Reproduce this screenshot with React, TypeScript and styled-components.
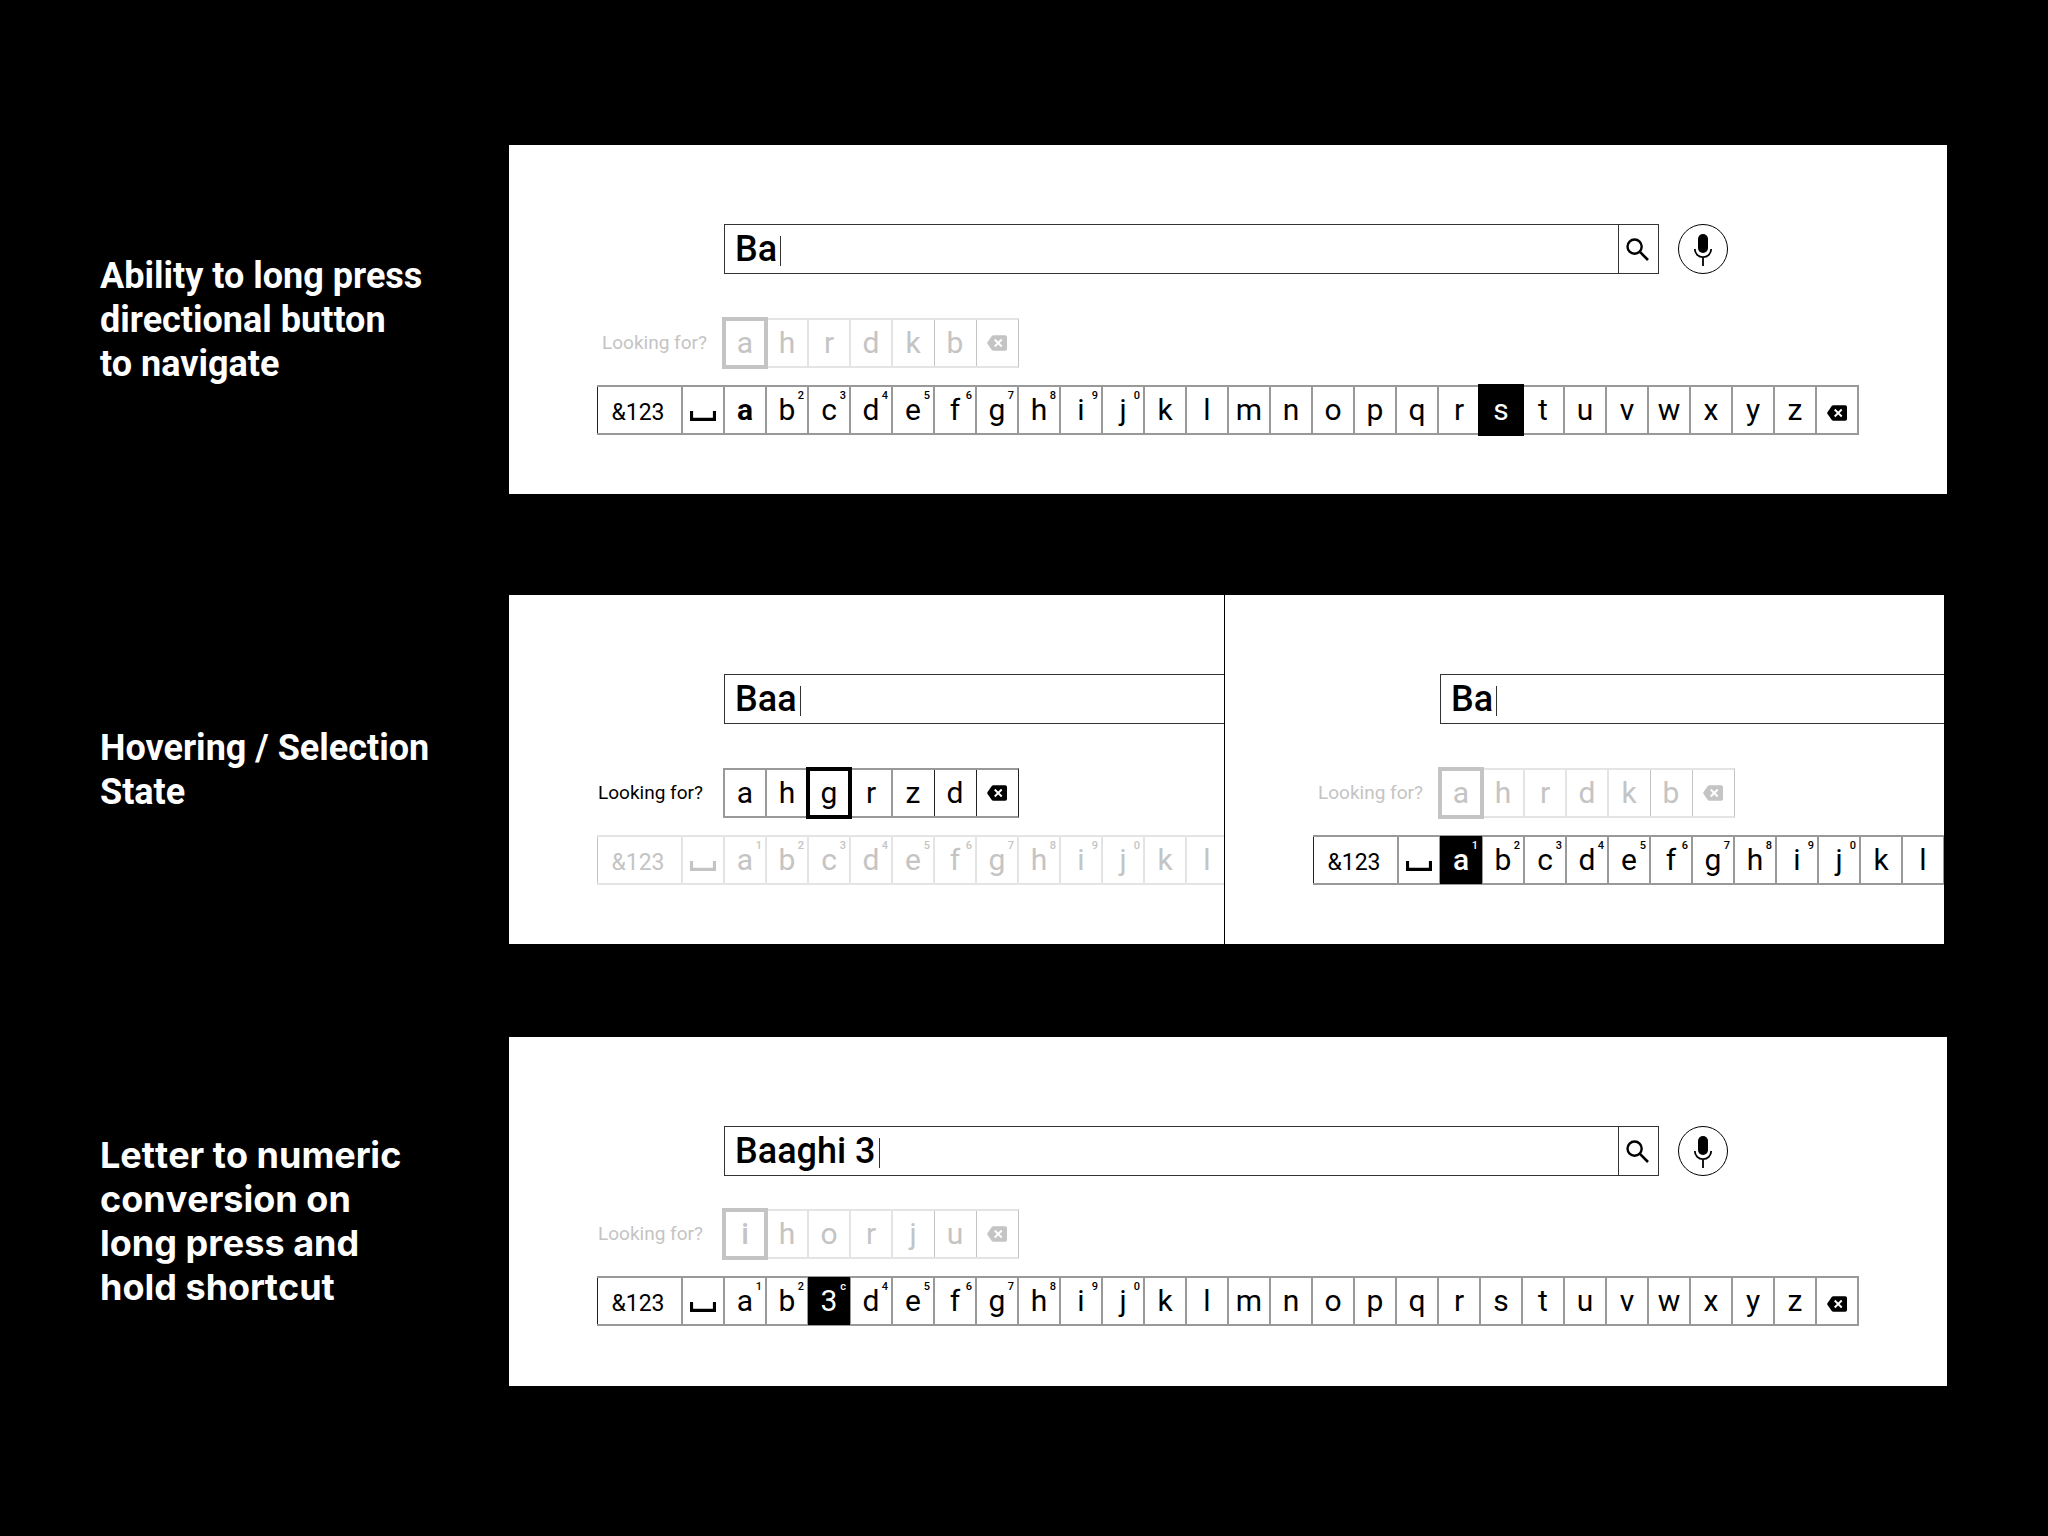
import React, { useState } from "react";
import styled, { createGlobalStyle, css } from "styled-components";

const GlobalStyle = createGlobalStyle`
  *, *::before, *::after { box-sizing: border-box; }
  body { margin: 0; background: #000; font-family: Roboto, "Liberation Sans", sans-serif; }
`;

const INK = "#000";
const MUTED = "#c4c4c4";
const LINE = "#999";
const MUTED_LINE = "#e4e4e4";

const Page = styled.main`
  min-height: 100vh;
  padding: 145px 101px 145px 100px;
  background: #000;
`;

const Section = styled.section<{ $space: number }>`
  display: grid;
  grid-template-columns: 409px minmax(0, 1fr);
  align-items: center;
  margin-top: ${(p) => p.$space}px;
`;

const Title = styled.h2<{ $inter?: boolean }>`
  margin: 0;
  padding-top: ${(p) => (p.$inter ? 18 : 0)}px;
  color: #fff;
  font-family: ${(p) => (p.$inter ? "Inter, " : "")}Roboto, "Liberation Sans", sans-serif;
  font-size: 36px;
  font-weight: 700;
  font-kerning: ${(p) => (p.$inter ? "none" : "auto")};
  line-height: 44px;
  white-space: pre-line;
`;

const Panel = styled.div`
  background: #fff;
  overflow: hidden;
`;

const SplitPanel = styled(Panel)`
  display: grid;
  grid-template-columns: 716fr 719fr;
  margin-right: 3px;
`;

const Half = styled.div<{ $divided?: boolean }>`
  min-width: 0;
  overflow: hidden;
  border-right: ${(p) => (p.$divided ? "1px solid #000" : "0")};
`;

const Board = styled.div<{ $low?: boolean }>`
  display: flex;
  flex-direction: column;
  padding: ${(p) => (p.$low ? "89px 0 60px 88px" : "79px 0 59px 88px")};
`;

const SearchRow = styled.form<{ $low?: boolean }>`
  display: flex;
  gap: 19px;
  margin: 0 0 ${(p) => (p.$low ? 33 : 44)}px 127px;
`;

const SearchBox = styled.div<{ $open?: boolean }>`
  display: flex;
  height: 50px;
  border: 1px solid #333;
  ${(p) =>
    p.$open
      ? css`
          flex: 1;
          border-right: 0;
        `
      : css`
          flex: 0 1 935px;
        `}
`;

const Field = styled.label`
  display: flex;
  flex: 1;
  align-items: center;
  gap: 3px;
  padding-left: 10px;
  cursor: text;
`;

const FieldInput = styled.input`
  field-sizing: content;
  height: 48px;
  padding: 0;
  border: 0;
  outline: 0;
  background: none;
  color: #000;
  font: 500 36px/48px Roboto, "Liberation Sans", sans-serif;
  caret-color: transparent;
`;

const Caret = styled.span`
  width: 1px;
  height: 30px;
  margin-top: 3px;
  background: #333;
`;

const SearchButton = styled.button`
  display: flex;
  align-items: center;
  justify-content: center;
  width: 40px;
  padding: 0 2px 0 0;
  border: 0;
  border-left: 1px solid #333;
  background: none;
  color: #000;
`;

const MicButton = styled.button`
  width: 50px;
  height: 50px;
  padding: 0;
  border: 0;
  background: none;
  color: #000;
`;

const SuggestRow = styled.div`
  display: grid;
  grid-template-columns: 126px max-content;
  margin-bottom: 17px;
`;

const Prompt = styled.span<{ $muted?: boolean; $indent?: boolean }>`
  padding-left: ${(p) => (p.$indent ? 5 : 1)}px;
  color: ${(p) => (p.$muted ? MUTED : INK)};
  font-size: 19px;
  line-height: 50px;
  white-space: nowrap;
`;

const Keys = styled.div<{ $muted?: boolean; $crispEnd?: boolean }>`
  --ink: ${(p) => (p.$muted ? MUTED : INK)};
  --line: ${(p) => (p.$muted ? MUTED_LINE : LINE)};
  --edge: ${(p) => (p.$muted ? MUTED : "#222")};
  display: flex;
  width: max-content;
  height: 50px;
  border: 2px solid var(--line);
  border-left: 0;
  color: var(--ink);
  ${(p) =>
    p.$crispEnd &&
    css`
      padding-right: 1px;
      border-right: 1px solid var(--edge);
    `}
`;

type Mark = "none" | "outline" | "fill" | "fillLarge";

const KeyButton = styled.button<{ $mark?: Mark; $weight?: number; $crisp?: boolean }>`
  position: relative;
  isolation: isolate;
  flex: none;
  width: ${(p) => (p.$crisp ? 41 : 42)}px;
  height: 46px;
  margin: 0 0 0 ${(p) => (p.$crisp ? 1 : 0)}px;
  padding: 0;
  border: 0;
  border-left: ${(p) => (p.$crisp ? "1px solid var(--edge)" : "2px solid var(--line)")};
  background: none;
  color: inherit;
  font: ${(p) => p.$weight ?? 400} 30px/46px Roboto, "Liberation Sans", sans-serif;
  text-align: center;

  ${(p) =>
    p.$mark === "outline" &&
    css`
      z-index: 1;
      &::before {
        content: "";
        position: absolute;
        z-index: -1;
        inset: -3px;
        border: 4px solid var(--ink);
        background: #fff;
      }
    `}
  ${(p) =>
    (p.$mark === "fill" || p.$mark === "fillLarge") &&
    css`
      z-index: 1;
      color: #fff;
      &::before {
        content: "";
        position: absolute;
        z-index: -1;
        inset: ${p.$mark === "fill" ? -1 : -3}px;
        background: #000;
      }
    `}
`;

const ModeKey = styled(KeyButton)`
  display: flex;
  justify-content: center;
  width: 84px;
  padding-right: 3px;
  border-left: 1px solid var(--edge);
  font-size: 23px;
  line-height: 51px;
`;

const IconKey = styled(KeyButton)<{ $raise?: boolean }>`
  display: flex;
  align-items: flex-end;
  justify-content: center;
  padding-bottom: ${(p) => (p.$raise ? 15 : 12)}px;
`;

const Alt = styled.span`
  position: absolute;
  top: 3px;
  right: 3px;
  font-size: 11px;
  font-weight: 500;
  line-height: 12px;
`;

const BackspaceIcon = () => (
  <svg width="20" height="16" viewBox="0 0 20 16" aria-hidden="true">
    <path
      d="M6.4 0.2H18.2Q20 0.2 20 2V14Q20 15.8 18.2 15.8H6.4Q5.3 15.8 4.6 14.8L0.4 8.8Q0 8 0.4 7.2L4.6 1.2Q5.3 0.2 6.4 0.2Z"
      fill="currentColor"
    />
    <path d="M7.7 4.5L14.7 11.5M14.7 4.5L7.7 11.5" stroke="#fff" strokeWidth="1.9" fill="none" />
  </svg>
);

const SpaceIcon = () => (
  <svg width="26" height="10" viewBox="0 0 26 10" aria-hidden="true">
    <path d="M1.5 0V8.3H24.5V0" stroke="currentColor" strokeWidth="3.2" fill="none" />
  </svg>
);

const SearchIcon = () => (
  <svg width="23" height="23" viewBox="0 0 23 23" aria-hidden="true">
    <circle cx="8.6" cy="8.6" r="7.1" stroke="currentColor" strokeWidth="2.4" fill="none" />
    <path d="M14.2 14.2L22 22" stroke="currentColor" strokeWidth="2.6" fill="none" />
  </svg>
);

const MicIcon = () => (
  <svg width="50" height="50" viewBox="0 0 50 50" aria-hidden="true" display="block">
    <circle cx="25" cy="25" r="24.5" stroke="currentColor" fill="none" />
    <rect x="20" y="10" width="10" height="19" rx="5" fill="currentColor" />
    <path d="M16.8 25a8.2 8.2 0 0 0 16.4 0M25 33V42" stroke="currentColor" strokeWidth="1.8" fill="none" />
  </svg>
);

function SearchBar({ initial, open, low }: { initial: string; open?: boolean; low?: boolean }) {
  const [query, setQuery] = useState(initial);
  return (
    <SearchRow $low={low} onSubmit={(e) => e.preventDefault()}>
      <SearchBox $open={open}>
        <Field>
          <FieldInput
            aria-label="Search"
            spellCheck={false}
            value={query}
            onChange={(e) => setQuery(e.target.value)}
          />
          <Caret />
        </Field>
        {!open && (
          <SearchButton type="submit" aria-label="Search">
            <SearchIcon />
          </SearchButton>
        )}
      </SearchBox>
      {!open && (
        <MicButton type="button" aria-label="Voice search">
          <MicIcon />
        </MicButton>
      )}
    </SearchRow>
  );
}

interface SuggestionsProps {
  letters: string;
  selected: number;
  weight?: number;
  muted?: boolean;
  indent?: boolean;
}

function Suggestions({ letters, selected, weight, muted, indent }: SuggestionsProps) {
  return (
    <SuggestRow>
      <Prompt $muted={muted} $indent={indent}>
        Looking for?
      </Prompt>
      <Keys role="group" aria-label="Suggested letters" $muted={muted} $crispEnd>
        {letters.split("").map((letter, i) => (
          <KeyButton
            key={letter}
            type="button"
            $mark={i === selected ? "outline" : "none"}
            $weight={i === selected ? weight : 400}
            $crisp={i === letters.length - 1}
          >
            {letter}
          </KeyButton>
        ))}
        <IconKey type="button" aria-label="Backspace" $crisp $raise>
          <BackspaceIcon />
        </IconKey>
      </Keys>
    </SuggestRow>
  );
}

interface KeySpec {
  label: string;
  alt?: string;
  mark?: Mark;
  weight?: number;
}

const ALPHABET = "abcdefghijklmnopqrstuvwxyz";
const DIGITS = "1234567890";

interface KeyboardProps {
  overrides?: Record<string, Partial<KeySpec>>;
  until?: string;
  muted?: boolean;
}

function Keyboard({ overrides = {}, until = "z", muted }: KeyboardProps) {
  const letters = ALPHABET.slice(0, ALPHABET.indexOf(until) + 1).split("");
  return (
    <Keys role="group" aria-label="Keyboard" $muted={muted}>
      <ModeKey type="button">&amp;123</ModeKey>
      <IconKey type="button" aria-label="Space">
        <SpaceIcon />
      </IconKey>
      {letters.map((letter, i) => {
        const spec: KeySpec = { label: letter, alt: DIGITS[i], ...overrides[letter] };
        return (
          <KeyButton key={letter} type="button" $mark={spec.mark} $weight={spec.weight}>
            {spec.label}
            {spec.alt && <Alt>{spec.alt}</Alt>}
          </KeyButton>
        );
      })}
      {until === "z" && (
        <IconKey type="button" aria-label="Backspace">
          <BackspaceIcon />
        </IconKey>
      )}
    </Keys>
  );
}

export default function App() {
  return (
    <>
      <GlobalStyle />
      <Page>
        <Section $space={0}>
          <Title>{"Ability to long press\ndirectional button\nto navigate"}</Title>
          <Panel>
            <Board>
              <SearchBar initial="Ba" />
              <Suggestions letters="ahrdkb" selected={0} muted indent />
              <Keyboard overrides={{ a: { alt: "", weight: 700 }, s: { mark: "fillLarge" } }} />
            </Board>
          </Panel>
        </Section>

        <Section $space={101}>
          <Title>{"Hovering / Selection\nState"}</Title>
          <SplitPanel>
            <Half $divided>
              <Board>
                <SearchBar initial="Baa" open />
                <Suggestions letters="ahgrzd" selected={2} />
                <Keyboard until="l" muted />
              </Board>
            </Half>
            <Half>
              <Board>
                <SearchBar initial="Ba" open />
                <Suggestions letters="ahrdkb" selected={0} muted indent />
                <Keyboard until="l" overrides={{ a: { mark: "fill", weight: 500 } }} />
              </Board>
            </Half>
          </SplitPanel>
        </Section>

        <Section $space={93}>
          <Title $inter>{"Letter to numeric\nconversion on\nlong press and\nhold shortcut"}</Title>
          <Panel>
            <Board $low>
              <SearchBar initial="Baaghi 3" low />
              <Suggestions letters="ihorju" selected={0} weight={500} muted />
              <Keyboard overrides={{ c: { label: "3", alt: "c", mark: "fill" } }} />
            </Board>
          </Panel>
        </Section>
      </Page>
    </>
  );
}
